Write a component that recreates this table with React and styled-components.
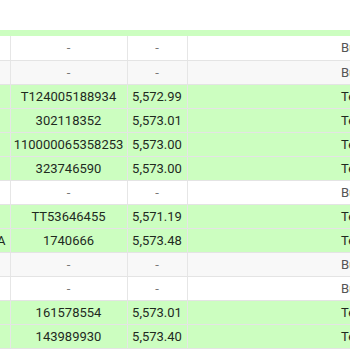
import React from 'react';
import styled, {createGlobalStyle} from 'styled-components';

const GlobalStyle = createGlobalStyle`
  html, body {
    margin: 0;
    padding: 0;
    background: #fff;
    font-family: Roboto, "Noto Sans", Arial, sans-serif;
  }
`;

const rows = [
    {tag: '', id: '-', price: '-', type: 'Buy', fill: false},
    {tag: '', id: '-', price: '-', type: 'Buy', fill: false},
    {tag: '', id: 'T124005188934', price: '5,572.99', type: 'Test', fill: true},
    {tag: '', id: '302118352', price: '5,573.01', type: 'Test', fill: true},
    {tag: '', id: '110000065358253', price: '5,573.00', type: 'Test', fill: true},
    {tag: '', id: '323746590', price: '5,573.00', type: 'Test', fill: true},
    {tag: '', id: '-', price: '-', type: 'Buy', fill: false},
    {tag: '', id: 'TT53646455', price: '5,571.19', type: 'Test', fill: true},
    {tag: 'A', id: '1740666', price: '5,573.48', type: 'Test', fill: true},
    {tag: '', id: '-', price: '-', type: 'Buy', fill: false},
    {tag: '', id: '-', price: '-', type: 'Buy', fill: false},
    {tag: '', id: '161578554', price: '5,573.01', type: 'Test', fill: true},
    {tag: '', id: '143989930', price: '5,573.40', type: 'Test', fill: true},
];

const App = () => {
    return (
        <>
            <GlobalStyle/>
            <Page>
                <Viewport>
                    <Grid>
                        <colgroup>
                            <col style={{width: 60}}/>
                            <col style={{width: 117}}/>
                            <col style={{width: 60}}/>
                            <col style={{width: 148}}/>
                            <col style={{width: 80}}/>
                        </colgroup>
                        <tbody>
                            <PeekRow>
                                <td colSpan={5}/>
                            </PeekRow>
                            {rows.map((r, i) =>
                                <Row key={i} $fill={r.fill} $even={i % 2 === 1}>
                                    <Tag>{r.tag}</Tag>
                                    <Cell $dim={r.id === '-'}>{r.id}</Cell>
                                    <Cell $dim={r.price === '-'}>{r.price}</Cell>
                                    <Blank/>
                                    <Kind $fill={r.fill}>{r.type}</Kind>
                                </Row>
                            )}
                        </tbody>
                    </Grid>
                </Viewport>
            </Page>
        </>
    )
}

const Page = styled.div`
  width: 350px;
  height: 350px;
  padding-top: 30px;
  box-sizing: border-box;
  overflow: hidden;
  background: #fff;
`;

const Viewport = styled.div`
  width: 350px;
  overflow: hidden;
`;

const Grid = styled.table`
  margin-left: -50px;
  border-collapse: collapse;
  table-layout: fixed;
  width: 465px;
  font-size: 13px;
  color: #1f2a1f;
`;

const PeekRow = styled.tr`
  height: 6px;
  background: #ccfec0;

  td {
    padding: 0;
  }
`;

const Row = styled.tr`
  height: 24px;
  background: ${p => p.$fill ? '#ccfec0' : (p.$even ? '#f8f8f8' : '#fff')};

  td {
    border-bottom: 1px solid #e4e4e4;
    padding: 0;
    height: 23px;
    white-space: nowrap;
    overflow: hidden;
  }
`;

const Tag = styled.td`
  text-align: right;
  padding-right: 4px !important;
  border-right: 1px solid #e6e6e6;
`;

const Cell = styled.td`
  text-align: center;
  border-right: 1px solid #e6e6e6;
  color: ${p => p.$dim ? '#777' : 'inherit'};
`;

const Blank = styled.td``;

const Kind = styled.td`
  text-align: left;
  padding-left: 6px !important;
  color: ${p => p.$fill ? '#1f2a1f' : '#555'};
`;

export default App;
